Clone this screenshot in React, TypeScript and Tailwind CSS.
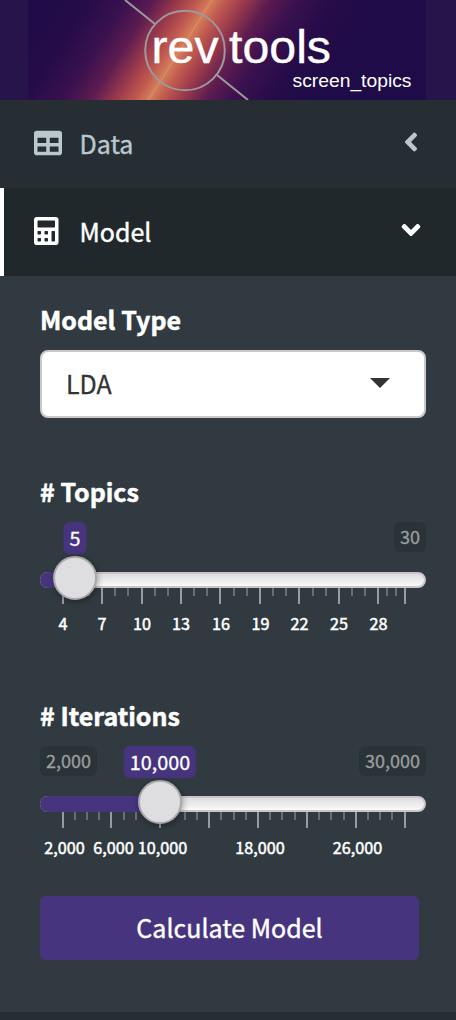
import type { ReactNode } from "react";
import { FaAngleDown, FaAngleLeft, FaCalculator, FaTable } from "react-icons/fa";

function Logo() {
  return (
    <svg className="block h-[100px] w-[398px]" viewBox="28 0 398 100">
      <defs>
        <linearGradient id="glow" gradientUnits="userSpaceOnUse" x1="61" y1="-26" x2="299" y2="126">
          <stop offset="0" stopColor="#1e0b47" />
          <stop offset="0.14" stopColor="#260c49" />
          <stop offset="0.25" stopColor="#3b114f" />
          <stop offset="0.33" stopColor="#5e1c50" />
          <stop offset="0.41" stopColor="#a03e4b" />
          <stop offset="0.46" stopColor="#c05a50" />
          <stop offset="0.5" stopColor="#d47f5b" />
          <stop offset="0.54" stopColor="#c05a50" />
          <stop offset="0.59" stopColor="#a03e4b" />
          <stop offset="0.67" stopColor="#5e1c50" />
          <stop offset="0.75" stopColor="#3b114f" />
          <stop offset="0.86" stopColor="#260c49" />
          <stop offset="1" stopColor="#1e0b47" />
        </linearGradient>
      </defs>
      <rect x="28" width="398" height="100" fill="url(#glow)" />
      <path d="M148.500 100L212 0" stroke="#e09a66" strokeWidth="0.700" />
      <g fill="none" stroke="#9d999f" strokeWidth="2">
        <circle cx="185" cy="50.500" r="39.800" />
        <path d="M125 0L155 24M217 75L248 100" />
      </g>
      <g fill="#fff" fontFamily="'Liberation Sans', Arial, sans-serif">
        <text x="151.500" y="63" fontSize="47" textLength="67" lengthAdjust="spacingAndGlyphs" stroke="#fff" strokeWidth="0.400">rev</text>
        <text x="229" y="63" fontSize="47" textLength="102" lengthAdjust="spacingAndGlyphs" stroke="#fff" strokeWidth="0.400">tools</text>
        <text x="292.500" y="87" fontSize="19" textLength="119" lengthAdjust="spacingAndGlyphs">screen_topics</text>
      </g>
    </svg>
  );
}

type Label = { x: number; text: string };
type SliderProps = {
  title: string;
  value: string;
  min?: string;
  max: string;
  position: number;
  major: number[];
  minor: number[];
  labels: Label[];
};

function Heading({ children }: { children: ReactNode }) {
  return <h2 className="-mt-px mb-[15px] h-8 text-[25px] leading-8 font-bold [-webkit-text-stroke:0.5px_#fff]">{children}</h2>;
}

function Slider({ title, value, min, max, position, major, minor, labels }: SliderProps) {
  return (
    <section className="flow-root h-[168px]">
      <Heading>{title}</Heading>
      <div className="relative flex h-[50px] items-start justify-between text-[18px] leading-[28px] text-[#9c9e9e] [-webkit-text-stroke:0.3px_#9c9e9e]">
        {min ? <span className="h-[30px] rounded-[6px] bg-[#2a3337] px-[6px]">{min}</span> : <span />}
        <span className="h-[30px] rounded-[6px] bg-[#2a3337] px-[6px]">{max}</span>
        <span
          className="absolute top-0 h-8 -translate-x-1/2 rounded-[6px] bg-[#46357e] px-[6px] text-[19.8px] leading-8 text-white [-webkit-text-stroke:0.3px_#fff]"
          style={{ left: position }}
        >
          {value}
        </span>
      </div>
      <div className="relative h-4 rounded-full border-2 border-[#c9c5c8] bg-linear-to-b from-[#dfdddf] to-[#fafafa]">
        <div className="absolute -top-[2px] -left-[2px] h-4 rounded-l-full bg-[#46357e]" style={{ width: position }} />
        <div
          className="absolute -top-[18px] z-10 size-11 -translate-x-1/2 rounded-full border-2 border-[#aaa8aa] bg-[#dedddf] shadow-[1px_2px_6px_rgba(0,0,0,0.35)]"
          style={{ left: position - 2 }}
        />
      </div>
      <svg className="block h-[46px] w-[386px]" viewBox="40 0 386 46">
        {major.map((x) => <rect key={x} x={x - 1} width="2" height="16" fill="#979c9f" />)}
        {minor.map((x) => <rect key={x} x={x - 1} width="2" height="8" fill="#666e72" />)}
        {labels.map(({ x, text }) => (
          <text key={text} x={x} y="42" textAnchor="middle" fontSize="16.2" fill="#fff" stroke="#fff" strokeWidth="0.5">{text}</text>
        ))}
      </svg>
    </section>
  );
}

function MenuRow({ icon, label, chevron, active }: { icon: ReactNode; label: string; chevron: ReactNode; active?: boolean }) {
  return (
    <div
      className={
        active
          ? "flex h-[88px] items-center border-l-4 border-white bg-[#21282b] pr-[35px] pl-[30px] text-white"
          : "flex h-[88px] items-center border-l-4 border-transparent bg-[#262d33] pr-[35px] pl-[30px] text-[#bac7cd]"
      }
    >
      <span className="-mt-[2px] w-[45.5px]">{icon}</span>
      <span className="-mt-0.5 flex-1 text-[25px] leading-8 [-webkit-text-stroke:0.4px_currentColor]">{label}</span>
      {chevron}
    </div>
  );
}

const topicLabels: Label[] = [
  { x: 63, text: "4" }, { x: 102, text: "7" }, { x: 142, text: "10" },
  { x: 181, text: "13" }, { x: 221, text: "16" }, { x: 260.5, text: "19" },
  { x: 299.5, text: "22" }, { x: 339, text: "25" }, { x: 378.5, text: "28" },
];

const iterationLabels: Label[] = [
  { x: 64.5, text: "2,000" }, { x: 113.5, text: "6,000" }, { x: 162.5, text: "10,000" },
  { x: 260, text: "18,000" }, { x: 357.5, text: "26,000" },
];

export default function App() {
  return (
    <div className="h-[1020px] w-[456px] overflow-hidden bg-[#262d33] font-['Noto_Sans_CJK_SC',sans-serif] text-white">
      <header className="flex h-[100px] justify-center bg-[#27144a] pr-[2px]">
        <Logo />
      </header>
      <MenuRow
        icon={<FaTable className="block size-7" />}
        label="Data"
        chevron={<FaAngleLeft className="relative -top-[2px] -right-[5px] block size-[30px]" />}
      />
      <MenuRow
        active
        icon={<FaCalculator className="block h-7 w-[24.5px]" />}
        label="Model"
        chevron={<FaAngleDown className="relative -top-[2px] -right-[5px] block size-[30px]" />}
      />
      <main className="h-[736px] bg-[#303a40] pt-7 pr-[30px] pl-10">
        <Heading>Model Type</Heading>
        <div className="flex h-[68px] items-center justify-between rounded-[8px] border-2 border-[#c9c8c9] bg-white pr-[34px] pl-6 text-[25px] leading-8 text-[#333]">
          <span className="-mt-0.5 [-webkit-text-stroke:0.3px_#333]">LDA</span>
          <span className="-mt-0.5 border-x-[10px] border-t-[10px] border-x-transparent border-t-[#333]" />
        </div>
        <div className="mt-[58px]">
          <Slider
            title="# Topics"
            value="5"
            max="30"
            position={35}
            major={[63, 102, 142, 181, 220, 260, 299, 339, 378, 405]}
            minor={[76, 89, 115, 128, 155, 168, 194, 207, 234, 247, 273, 286, 313, 326, 352, 365, 387, 396]}
            labels={topicLabels}
          />
        </div>
        <div className="mt-14">
          <Slider
            title="# Iterations"
            value="10,000"
            min="2,000"
            max="30,000"
            position={120}
            major={[63, 111, 160, 209, 258, 307, 356, 405]}
            minor={[75, 87, 99, 124, 136, 148, 173, 185, 197, 221, 234, 246, 270, 282, 295, 319, 331, 344, 368, 380, 392]}
            labels={iterationLabels}
          />
        </div>
        <button className="mt-7 block h-16 w-[379px] rounded-[6px] bg-[#46357e] pb-[3px] text-[25px] leading-8 [-webkit-text-stroke:0.4px_#fff]">Calculate Model</button>
      </main>
    </div>
  );
}
